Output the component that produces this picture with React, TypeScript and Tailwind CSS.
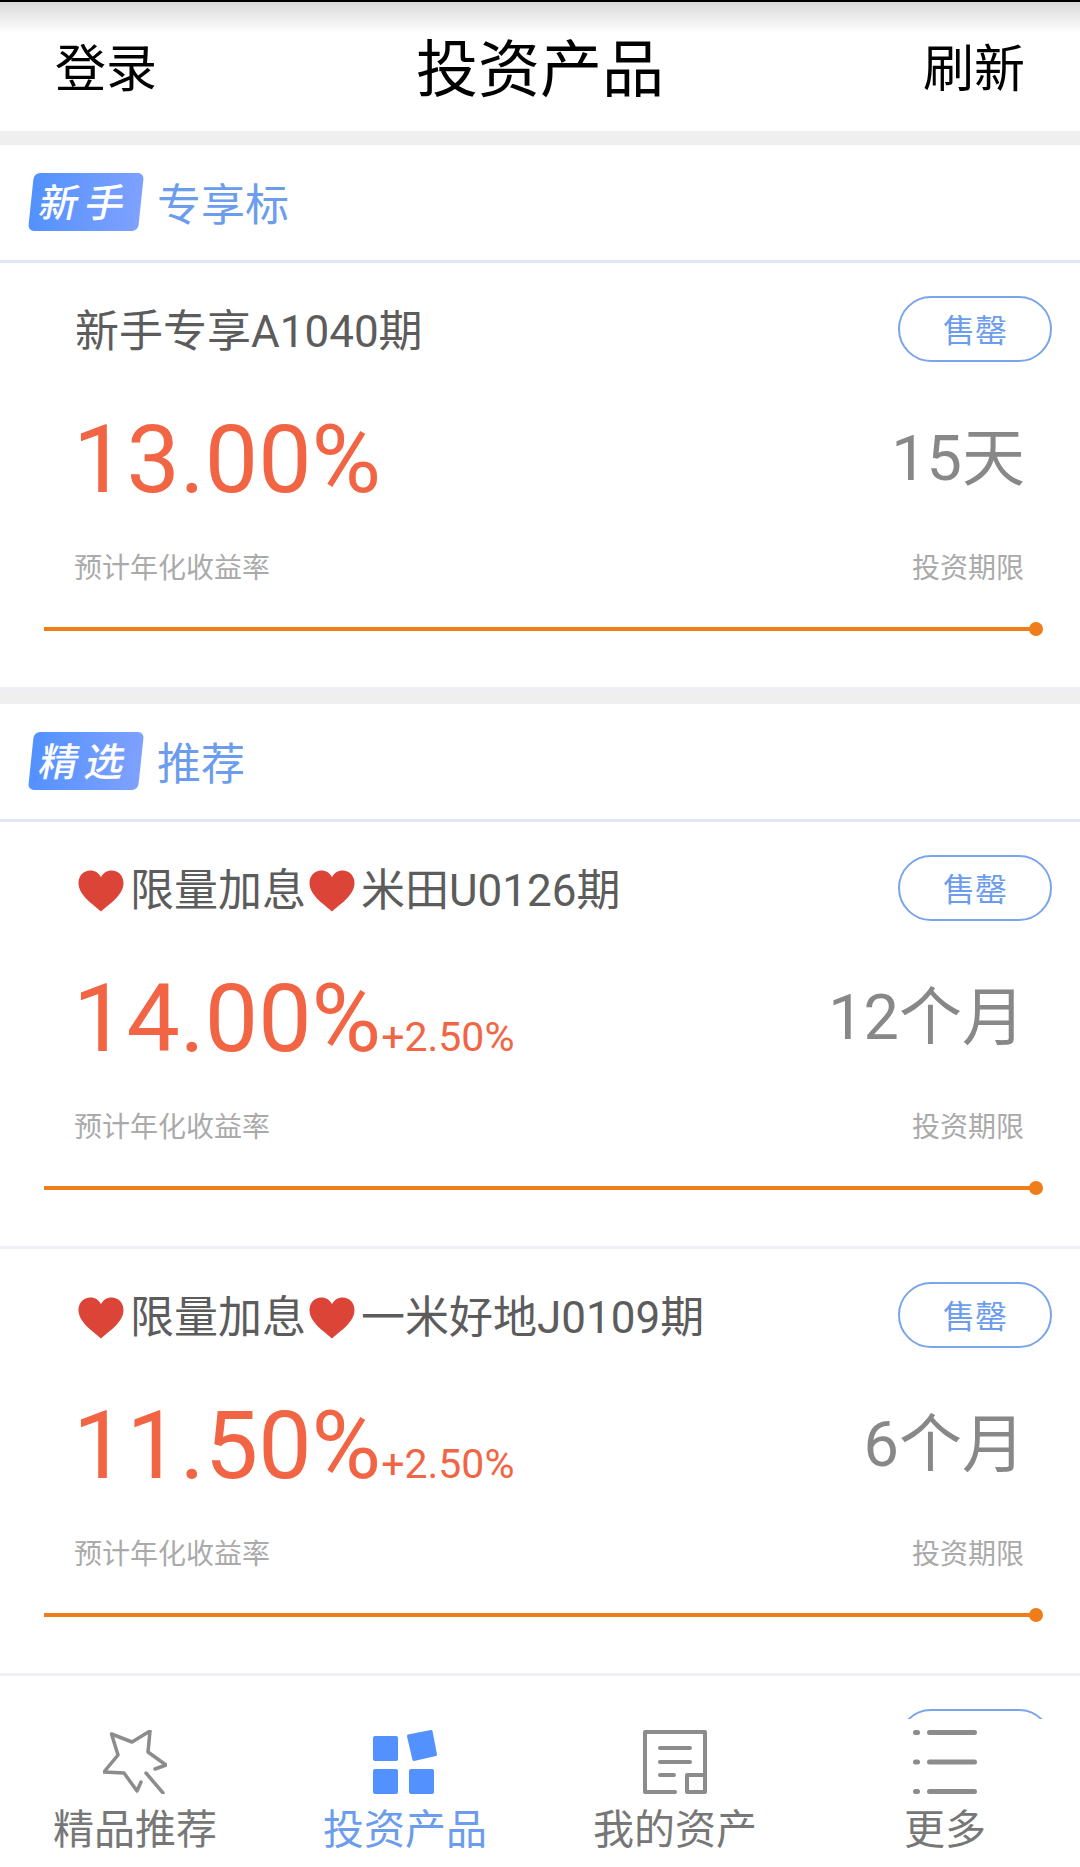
const font = "font-['Roboto','Noto_Sans_CJK_SC',sans-serif]";

function Heart() {
  return (
    <span className="flex h-[44px] w-[55px] shrink-0 items-center justify-center pr-[3px]">
      <svg width="46" height="42" viewBox="0 0 45 40" preserveAspectRatio="none">
        <path
          d="M22.5 39.5C17 34 1 25 .5 13 .2 5.500 5.800.5 12 .5c4.800 0 8.500 2.500 10.500 6.500C24.500 3 28.200.5 33 .5c6.200 0 11.800 5 11.500 12.500C44 25 28 34 22.500 39.500Z"
          fill="#dc4438"
        />
      </svg>
    </span>
  );
}

function SectionHead({ badge, text }: { badge: string; text: string }) {
  return (
    <div className="flex h-[118px] items-start border-b-[3px] border-[#e0e6f2] bg-white pl-[31px] pt-[28px]">
      <div className="flex h-[58px] w-[110px] -skew-x-6 items-center justify-center rounded-[6px] bg-gradient-to-r from-[#5291ff] to-[#7ea1ff] pt-[4px]">
        <span className="inline-block -skew-x-6 text-[39px] leading-none font-medium tracking-[7px] text-white">{badge}</span>
      </div>
      <span className="ml-[16px] h-[58px] text-[44px] leading-[66px] text-[#6b9cee]">{text}</span>
    </div>
  );
}

function Button() {
  return (
    <div className="flex h-[66px] w-[154px] items-center justify-center rounded-full border-2 border-[#7aa5ea] pt-[4px] text-[32px] text-[#6b9cee]">
      售罄
    </div>
  );
}

type Product = { name: string; hearts?: boolean; rate: string; extra?: string; term: string };

function Card({ p, className }: { p: Product; className: string }) {
  return (
    <div className={`bg-white pt-[33px] ${className}`}>
      <div className="flex h-[66px] items-center justify-between pr-[28px] pl-[75px]">
        <div className="flex items-center pt-[6px] text-[44px] text-[#5c5c5c]">
          {p.hearts && <Heart />}
          {p.hearts && <span>限量加息</span>}
          {p.hearts && <Heart />}
          <span>{p.name}</span>
        </div>
        <Button />
      </div>
      <div className="mt-[31px] flex h-[130px] items-center justify-between pr-[55px] pl-[73px]">
        <div className="flex items-baseline pt-[3px] text-[#f26544]">
          <span className="text-[95px] leading-none">{p.rate}</span>
          {p.extra && <span className="text-[41px] leading-none">{p.extra}</span>}
        </div>
        <span className="text-[63px] leading-none text-[#888888]">{p.term}</span>
      </div>
      <div className="mt-[24px] flex h-[40px] items-center justify-between pt-[4px] pr-[56px] pl-[74px] text-[28px] text-[#aaaaaa]">
        <span>预计年化收益率</span>
        <span>投资期限</span>
      </div>
      <div className="relative mt-[40px] ml-[44px] h-[4px] w-[992px] bg-[#ee7d1a]">
        <div className="absolute top-[-5px] right-[-7px] h-[14px] w-[14px] rounded-full bg-[#ee7d1a]" />
      </div>
    </div>
  );
}

function StarIcon() {
  return (
    <svg width="64" height="64" viewBox="0 0 64 64" fill="none" stroke="#8c8c8c" strokeWidth="3.5" strokeLinecap="round" strokeLinejoin="round">
      <path d="M52 39l11-4-18-13 2-21-18 11L8.500 4 15 25 1 42l20 1 13 18 4-9" />
      <path d="M43 43l17 20" />
    </svg>
  );
}

function GridIcon() {
  return (
    <svg width="64" height="64" viewBox="0 0 64 64" fill="#5291ff">
      <rect x="0" y="6" width="25" height="25" rx="2" />
      <path d="M35 4.500 58 0c.8 0 1.300.4 1.500 1L64 24.500c0 .8-.4 1.300-1 1.500L41 31c-.8 0-1.300-.4-1.500-1L34 6.500c0-.8.4-1.700 1-2Z" />
      <rect x="0" y="39" width="25" height="25" rx="2" />
      <rect x="36" y="39" width="25" height="25" rx="2" />
    </svg>
  );
}

function DocIcon() {
  return (
    <svg width="64" height="64" viewBox="0 0 64 64" fill="none" stroke="#8c8c8c" strokeWidth="4" strokeLinecap="round" strokeLinejoin="round">
      <path d="M32 62H2V2h60v60H44V45h18" />
      <path d="M17 18h30M17 32h30M17 45h14" />
    </svg>
  );
}

function ListIcon() {
  return (
    <svg width="64" height="64" viewBox="0 0 64 64" fill="#8c8c8c">
      {[0, 29.500, 59].map((y) => (
        <g key={y}>
          <rect x="0" y={y} width="7" height="5" rx="2.500" />
          <rect x="14" y={y} width="50" height="5" rx="2.500" />
        </g>
      ))}
    </svg>
  );
}

const tabs = [
  { label: '精品推荐', icon: <StarIcon /> },
  { label: '投资产品', icon: <GridIcon />, active: true },
  { label: '我的资产', icon: <DocIcon /> },
  { label: '更多', icon: <ListIcon /> },
];

export default function App() {
  return (
    <div className={`relative h-[1867px] w-[1080px] overflow-hidden bg-white ${font}`}>
      <header className="h-[131px] bg-white">
        <div className="h-[2px] bg-black" />
        <div className="h-[31px] bg-gradient-to-b from-[#d9d9d9] to-white" />
        <div className="flex h-[70px] items-center justify-between pt-[4px] pr-[55px] pl-[55px] text-[51px] text-black">
          <span>登录</span>
          <span className="text-[62px]">投资产品</span>
          <span>刷新</span>
        </div>
      </header>
      <div className="h-[14px] bg-[#efefef]" />

      <SectionHead badge="新手" text="专享标" />
      <Card className="h-[424px]" p={{ name: '新手专享A1040期', rate: '13.00%', term: '15天' }} />
      <div className="h-[17px] border-t-[3px] border-[#eef0f6] bg-[#efefef]" />

      <SectionHead badge="精选" text="推荐" />
      <Card className="h-[427px] border-b-[3px] border-[#eef0f6]" p={{ name: '米田U0126期', hearts: true, rate: '14.00%', extra: '+2.50%', term: '12个月' }} />
      <Card className="h-[427px] border-b-[3px] border-[#eef0f6]" p={{ name: '一米好地J0109期', hearts: true, rate: '11.50%', extra: '+2.50%', term: '6个月' }} />
      <div className="flex justify-end pt-[33px] pr-[28px]">
        <Button />
      </div>

      <nav className="absolute inset-x-0 bottom-0 grid h-[148px] grid-cols-4 bg-white pt-[11px]">
        {tabs.map((t) => (
          <div key={t.label} className="flex flex-col items-center">
            {t.icon}
            <span className={`mt-[6px] text-[41px] leading-[60px] ${t.active ? 'text-[#6b9cee]' : 'text-[#777777]'}`}>{t.label}</span>
          </div>
        ))}
      </nav>
    </div>
  );
}
